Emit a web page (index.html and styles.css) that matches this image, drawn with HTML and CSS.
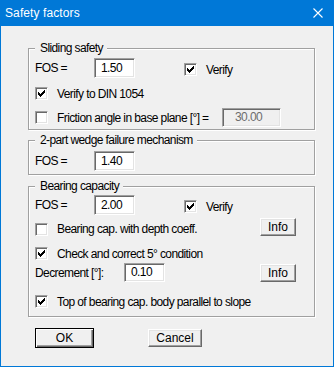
FILE: index.html
```html
<!DOCTYPE html>
<html lang="en">
<head>
  <meta charset="UTF-8">
  <title>Safety factors</title>
  <link rel="stylesheet" href="styles.css">
</head>
<body>
  <div class="window">
    <div class="titlebar">
      <span class="title">Safety factors</span>
      <svg class="close" width="10" height="10" viewBox="0 0 10 10"><path d="M0.5 0.5L9.5 9.5M9.5 0.5L0.5 9.5" stroke="#fff" stroke-width="1.1"/></svg>
    </div>

    <div class="client">
      <!-- Sliding safety -->
      <fieldset class="group group-sliding">
        <legend>Sliding safety</legend>
        <div class="row row-fos">
          <span class="lbl-fos">FOS =</span>
          <span class="edit">1.50</span>
          <span class="chk checked verify-chk"><svg viewBox="1 1 11 11"><path d="M9 3h1v1h-1zM8 4h2v1h-2zM3 5h1v1h-1zM7 5h3v1h-3zM3 6h2v1h-2zM6 6h3v1h-3zM3 7h5v1h-5zM4 8h3v1h-3zM5 9h1v1h-1z"/></svg></span>
          <span class="chk-label">Verify</span>
        </div>
        <div class="row row-din">
          <span class="chk checked"><svg viewBox="1 1 11 11"><path d="M9 3h1v1h-1zM8 4h2v1h-2zM3 5h1v1h-1zM7 5h3v1h-3zM3 6h2v1h-2zM6 6h3v1h-3zM3 7h5v1h-5zM4 8h3v1h-3zM5 9h1v1h-1z"/></svg></span>
          <span class="chk-label">Verify to DIN 1054</span>
        </div>
        <div class="row row-friction">
          <span class="chk"></span>
          <span class="chk-label">Friction angle in base plane [°] =</span>
          <span class="edit edit-disabled">30.00</span>
        </div>
      </fieldset>

      <!-- Wedge -->
      <fieldset class="group group-wedge">
        <legend>2-part wedge failure mechanism</legend>
        <div class="row row-wedge">
          <span class="lbl-fos">FOS =</span>
          <span class="edit">1.40</span>
        </div>
      </fieldset>

      <!-- Bearing capacity -->
      <fieldset class="group group-bearing">
        <legend>Bearing capacity</legend>
        <div class="row row-bfos">
          <span class="lbl-fos">FOS =</span>
          <span class="edit">2.00</span>
          <span class="chk checked verify-chk"><svg viewBox="1 1 11 11"><path d="M9 3h1v1h-1zM8 4h2v1h-2zM3 5h1v1h-1zM7 5h3v1h-3zM3 6h2v1h-2zM6 6h3v1h-3zM3 7h5v1h-5zM4 8h3v1h-3zM5 9h1v1h-1z"/></svg></span>
          <span class="chk-label">Verify</span>
        </div>
        <div class="row row-depth">
          <span class="chk chk-low"></span>
          <span class="chk-label chk-low">Bearing cap. with depth coeff.</span>
          <button class="btn btn-info">Info</button>
        </div>
        <div class="row row-check5">
          <span class="chk checked"><svg viewBox="1 1 11 11"><path d="M9 3h1v1h-1zM8 4h2v1h-2zM3 5h1v1h-1zM7 5h3v1h-3zM3 6h2v1h-2zM6 6h3v1h-3zM3 7h5v1h-5zM4 8h3v1h-3zM5 9h1v1h-1z"/></svg></span>
          <span class="chk-label">Check and correct 5° condition</span>
        </div>
        <div class="row row-decrement">
          <span class="lbl-dec">Decrement [°]:</span>
          <span class="edit">0.10</span>
          <button class="btn btn-info">Info</button>
        </div>
        <div class="row row-top">
          <span class="chk checked"><svg viewBox="1 1 11 11"><path d="M9 3h1v1h-1zM8 4h2v1h-2zM3 5h1v1h-1zM7 5h3v1h-3zM3 6h2v1h-2zM6 6h3v1h-3zM3 7h5v1h-5zM4 8h3v1h-3zM5 9h1v1h-1z"/></svg></span>
          <span class="chk-label">Top of bearing cap. body parallel to slope</span>
        </div>
      </fieldset>

      <div class="actions">
        <button class="btn btn-default">OK</button>
        <button class="btn btn-cancel">Cancel</button>
      </div>
    </div>
  </div>
</body>
</html>
```

FILE: styles.css
```css
:root {
  --accent: #0078d7;
  --face: #f0f0f0;
  --shadow: #a0a0a0;
  --dark-shadow: #696969;
  --light: #e3e3e3;
}

* {
  box-sizing: border-box;
}

body {
  margin: 0;
  font-family: "Liberation Sans", Arial, sans-serif;
  font-size: 12px;
  letter-spacing: -0.6px;
  color: #000;
  background: #fff;
}

.window {
  width: 334px;
  height: 367px;
  background: var(--face);
  border: 1px solid var(--accent);
  border-top: 0;
  display: flex;
  flex-direction: column;
}

.titlebar {
  height: 26px;
  flex: none;
  background: var(--accent);
  color: #fff;
  display: flex;
  align-items: center;
  justify-content: space-between;
  padding: 0 10px 0 4px;
}

.title {
  letter-spacing: 0.1px;
}

.close {
  display: block;
}

.client {
  padding: 15px 0 0 27px;
}

/* Group boxes */
.group {
  margin: 0;
  width: 287px;
  min-width: 0;
  padding: 0 18px 0 6px;
  border: 1px solid var(--shadow);
  box-shadow: inset 1px 1px #fff, 1px 1px #fff;
}

.group legend {
  padding: 0 4px 0 5px;
  line-height: 15px;
  height: 15px;
  background: var(--face);
}

.group-wedge {
  margin-top: 3px;
}

.group-bearing {
  margin-top: 4px;
  padding-bottom: 5px;
}

.row {
  display: flex;
  align-items: center;
}

.row-fos { height: 20px; margin-top: 2px; }
.row-din { height: 19px; margin-top: 6px; }
.row-friction { height: 19px; margin-top: 5px; margin-bottom: 2px; }
.row-wedge { height: 20px; margin-top: 3px; margin-bottom: 3px; }
.row-bfos { height: 20px; margin-top: 1px; }
.row-depth { height: 18px; margin-top: 3px; }
.row-check5 { height: 19px; margin-top: 8px; }
.row-decrement { height: 19px; }
.row-top { height: 19px; margin-top: 10px; }

.lbl-fos {
  width: 59px;
  flex: none;
}

.lbl-dec {
  width: 89px;
  flex: none;
}

/* Edit fields */
.edit {
  flex: none;
  width: 41px;
  height: 20px;
  line-height: 18px;
  padding-left: 6px;
  background: #fff;
  border: 1px solid;
  border-color: var(--shadow) #fff #fff var(--shadow);
  box-shadow: inset 1px 1px var(--dark-shadow), inset -1px -1px var(--light);
}

.row-friction .edit,
.row-decrement .edit {
  height: 19px;
  line-height: 17px;
}

.edit-disabled {
  width: 59px;
  height: 18px;
  margin-left: auto;
  margin-right: 15px;
  padding-left: 12px;
  background: var(--face);
  color: #6d6d6d;
}

/* Check boxes */
.chk {
  flex: none;
  width: 13px;
  height: 13px;
  background: #fff;
  border: 1px solid;
  border-color: var(--shadow) #fff #fff var(--shadow);
  box-shadow: inset 1px 1px var(--dark-shadow), inset -1px -1px var(--light);
}

.chk svg {
  display: block;
  width: 11px;
  height: 11px;
  shape-rendering: crispEdges;
}

.chk-label {
  margin-left: 9px;
  white-space: nowrap;
}

.verify-chk {
  margin-left: 49px;
  margin-top: 3px;
}

.verify-chk + .chk-label {
  margin-top: 3px;
}

.chk-low {
  margin-top: 4px;
}

.chk-label.chk-low {
  margin-top: 4px;
}

/* Push buttons */
.btn {
  font: inherit;
  color: #000;
  padding: 0;
  background: var(--face);
  border: 1px solid;
  border-color: #fff var(--dark-shadow) var(--dark-shadow) #fff;
  box-shadow: inset -1px -1px var(--shadow), inset 1px 1px var(--light);
  text-align: center;
}

.btn-info {
  width: 36px;
  height: 18px;
  margin-left: auto;
}

.actions {
  display: flex;
  align-items: flex-start;
  margin-top: 11px;
  padding-left: 7px;
  gap: 54px;
}

.btn-default {
  width: 59px;
  height: 20px;
  border: 1px solid #000;
  box-shadow: inset 1px 1px #fff, inset -1px -1px var(--dark-shadow), inset -2px -2px var(--shadow);
}

.btn-cancel {
  width: 54px;
  height: 18px;
  margin-top: 1px;
}
```
